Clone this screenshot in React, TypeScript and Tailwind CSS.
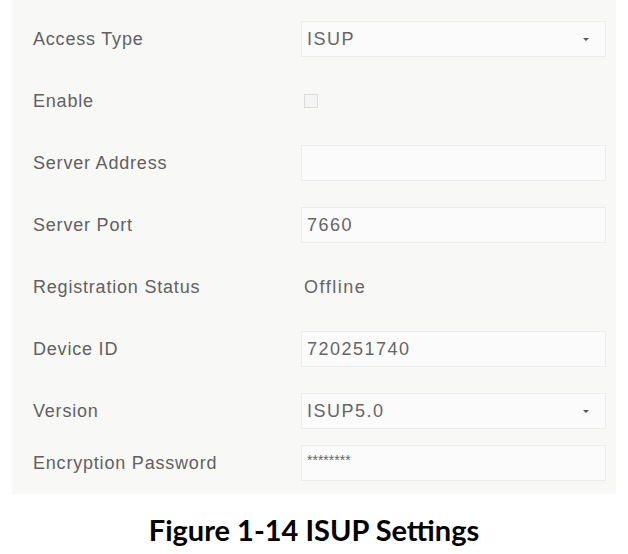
import React from "react";

const Label = ({ children }: { children: React.ReactNode }) => (
  <div className="w-[268px] shrink-0 text-[18px] tracking-[0.8px] text-[#616161]">{children}</div>
);

const Box = ({ children, arrow }: { children?: React.ReactNode; arrow?: boolean }) => (
  <div className="flex h-[36px] w-[305px] items-center justify-between border border-[#ececec] bg-[#fbfbfb] pl-[5px] pr-[16px] text-[18px] tracking-[1.5px] text-[#666]">
    <span>{children}</span>
    {arrow && <span className="h-0 w-0 border-x-[3px] border-t-[3px] border-x-transparent border-t-[#555]" />}
  </div>
);

export default function App() {
  const f = { fontFamily: '"Liberation Sans", Arial, sans-serif' };
  return (
    <div className="h-[554px] w-[628px] bg-white" style={f}>
      <div className="ml-[12px] flex w-[604px] flex-col bg-[#f8f8f7] pb-[12px] pl-[21px] pt-[20px]">
        <div className="flex h-[38px] items-center">
          <Label>Access Type</Label>
          <Box arrow>ISUP</Box>
        </div>
        <div className="mt-[24px] flex h-[38px] items-center">
          <Label>Enable</Label>
          <div className="ml-[3px] h-[14px] w-[14px] border border-[#dcdcdc] bg-[#f4f4f4]" />
        </div>
        <div className="mt-[24px] flex h-[38px] items-center">
          <Label>Server Address</Label>
          <Box />
        </div>
        <div className="mt-[24px] flex h-[38px] items-center">
          <Label>Server Port</Label>
          <Box>7660</Box>
        </div>
        <div className="mt-[24px] flex h-[38px] items-center">
          <Label>Registration Status</Label>
          <div className="pl-[3px] text-[18px] tracking-[1.5px] text-[#666]">Offline</div>
        </div>
        <div className="mt-[24px] flex h-[38px] items-center">
          <Label>Device ID</Label>
          <Box>720251740</Box>
        </div>
        <div className="mt-[24px] flex h-[38px] items-center">
          <Label>Version</Label>
          <Box arrow>ISUP5.0</Box>
        </div>
        <div className="mt-[14px] flex h-[38px] items-center">
          <Label>Encryption Password</Label>
          <Box>
            <span className="relative -top-[4px] text-[14px] tracking-[0px]">********</span>
          </Box>
        </div>
      </div>
      <div
        className="mt-[21px] text-center text-[29px] leading-none font-bold text-black"
        style={{ fontFamily: 'Lato, "Open Sans", sans-serif' }}
      >
        Figure 1-14 ISUP Settings
      </div>
    </div>
  );
}
